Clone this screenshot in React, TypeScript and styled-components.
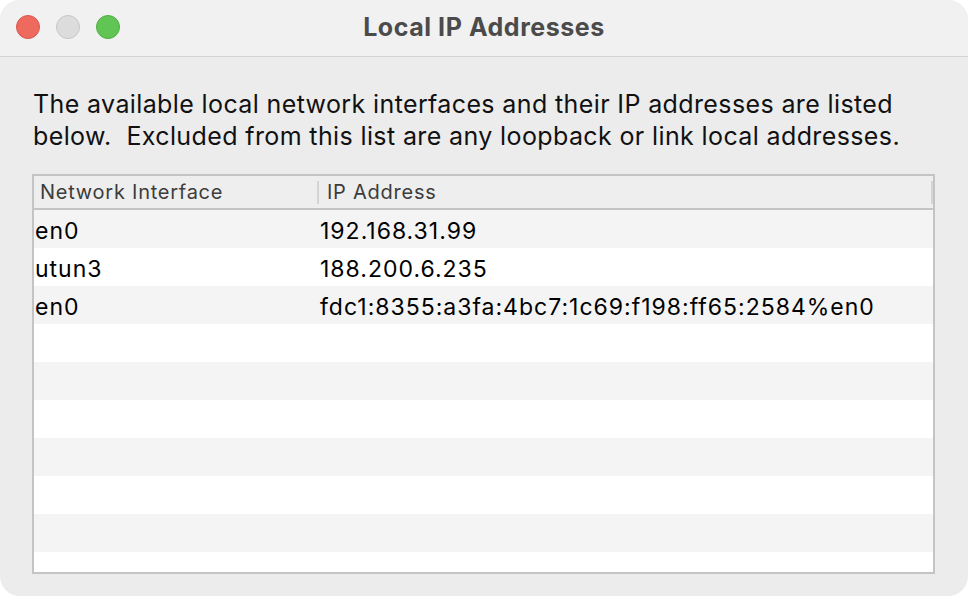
import React from "react";
import styled, { createGlobalStyle } from "styled-components";

const Global = createGlobalStyle`
  html, body { margin: 0; padding: 0; background: #ffffff; }
  body { font-family: Inter, "Noto Sans", "Liberation Sans", sans-serif; }
  * { box-sizing: border-box; }
`;

const Window = styled.div`
  width: 968px;
  height: 596px;
  border-radius: 20px;
  background: #ececec;
  overflow: hidden;
  display: flex;
  flex-direction: column;
`;

const TitleBar = styled.div`
  height: 57px;
  flex: none;
  background: #f1f1f1;
  border-bottom: 1px solid #d3d3d3;
  display: grid;
  grid-template-columns: 1fr auto 1fr;
  align-items: center;
`;

const Lights = styled.div`
  display: flex;
  gap: 16px;
  padding-left: 16px;
  padding-bottom: 2px;
`;

const Light = styled.span<{ $fill: string; $edge: string }>`
  width: 24px;
  height: 24px;
  border-radius: 50%;
  background: ${(p) => p.$fill};
  border: 1px solid ${(p) => p.$edge};
`;

const Title = styled.div`
  font-size: 25px;
  font-weight: 700;
  letter-spacing: 0.55px;
  color: #4b4b4b;
  padding-bottom: 3px;
`;

const Content = styled.div`
  flex: 1;
  display: flex;
  flex-direction: column;
  padding: 32px 33px 0 32px;
`;

const Intro = styled.p`
  margin: 0 0 22px 1px;
  font-size: 25px;
  letter-spacing: 0.38px;
  line-height: 31.5px;
  color: #111;
  white-space: nowrap;
`;

const Table = styled.div`
  width: 903px;
  height: 400px;
  border: 2px solid #c4c4c4;
  background: #ffffff;
  display: flex;
  flex-direction: column;
  overflow: hidden;
`;

const HeaderRow = styled.div`
  height: 34px;
  flex: none;
  display: grid;
  grid-template-columns: 285px 1fr;
  background: #eeeeee;
  border-bottom: 2px solid #c4c4c4;
  font-size: 20px;
  letter-spacing: 0.75px;
  color: #3c3c3c;
`;

const HeaderCell = styled.div<{ $pad: number }>`
  display: flex;
  align-items: center;
  padding-left: ${(p) => p.$pad}px;
  position: relative;
  white-space: nowrap;
  &::after {
    content: "";
    position: absolute;
    right: 0;
    top: 5px;
    bottom: 4px;
    width: 2px;
    background: #d4d4d4;
  }
`;

const Row = styled.div<{ $striped: boolean }>`
  height: 38px;
  flex: none;
  display: grid;
  grid-template-columns: 285px 1fr;
  align-items: center;
  padding-top: 3px;
  background: ${(p) => (p.$striped ? "#f4f4f4" : "#ffffff")};
  font-size: 23px;
  letter-spacing: 1px;
  color: #000;
`;

const Cell = styled.div`
  padding-left: 1px;
  white-space: nowrap;
`;

const rows: [string, string][] = [
  ["en0", "192.168.31.99"],
  ["utun3", "188.200.6.235"],
  ["en0", "fdc1:8355:a3fa:4bc7:1c69:f198:ff65:2584%en0"],
];

export default function App() {
  const all: [string, string][] = [...rows];
  while (all.length < 11) all.push(["", ""]);
  return (
    <>
      <Global />
      <Window>
        <TitleBar>
          <Lights>
            <Light $fill="#ee6a5f" $edge="#d8574c" />
            <Light $fill="#dcdcdc" $edge="#c6c6c6" />
            <Light $fill="#61c555" $edge="#4fae43" />
          </Lights>
          <Title>Local IP Addresses</Title>
          <div />
        </TitleBar>
        <Content>
          <Intro>
            The available local network interfaces and their IP addresses are listed
            <br />
            below.&nbsp; Excluded from this list are any loopback or link local addresses.
          </Intro>
          <Table>
            <HeaderRow>
              <HeaderCell $pad={6}>Network Interface</HeaderCell>
              <HeaderCell $pad={8}>IP Address</HeaderCell>
            </HeaderRow>
            {all.map(([a, b], i) => (
              <Row key={i} $striped={i % 2 === 0}>
                <Cell>{a}</Cell>
                <Cell>{b}</Cell>
              </Row>
            ))}
          </Table>
        </Content>
      </Window>
    </>
  );
}
